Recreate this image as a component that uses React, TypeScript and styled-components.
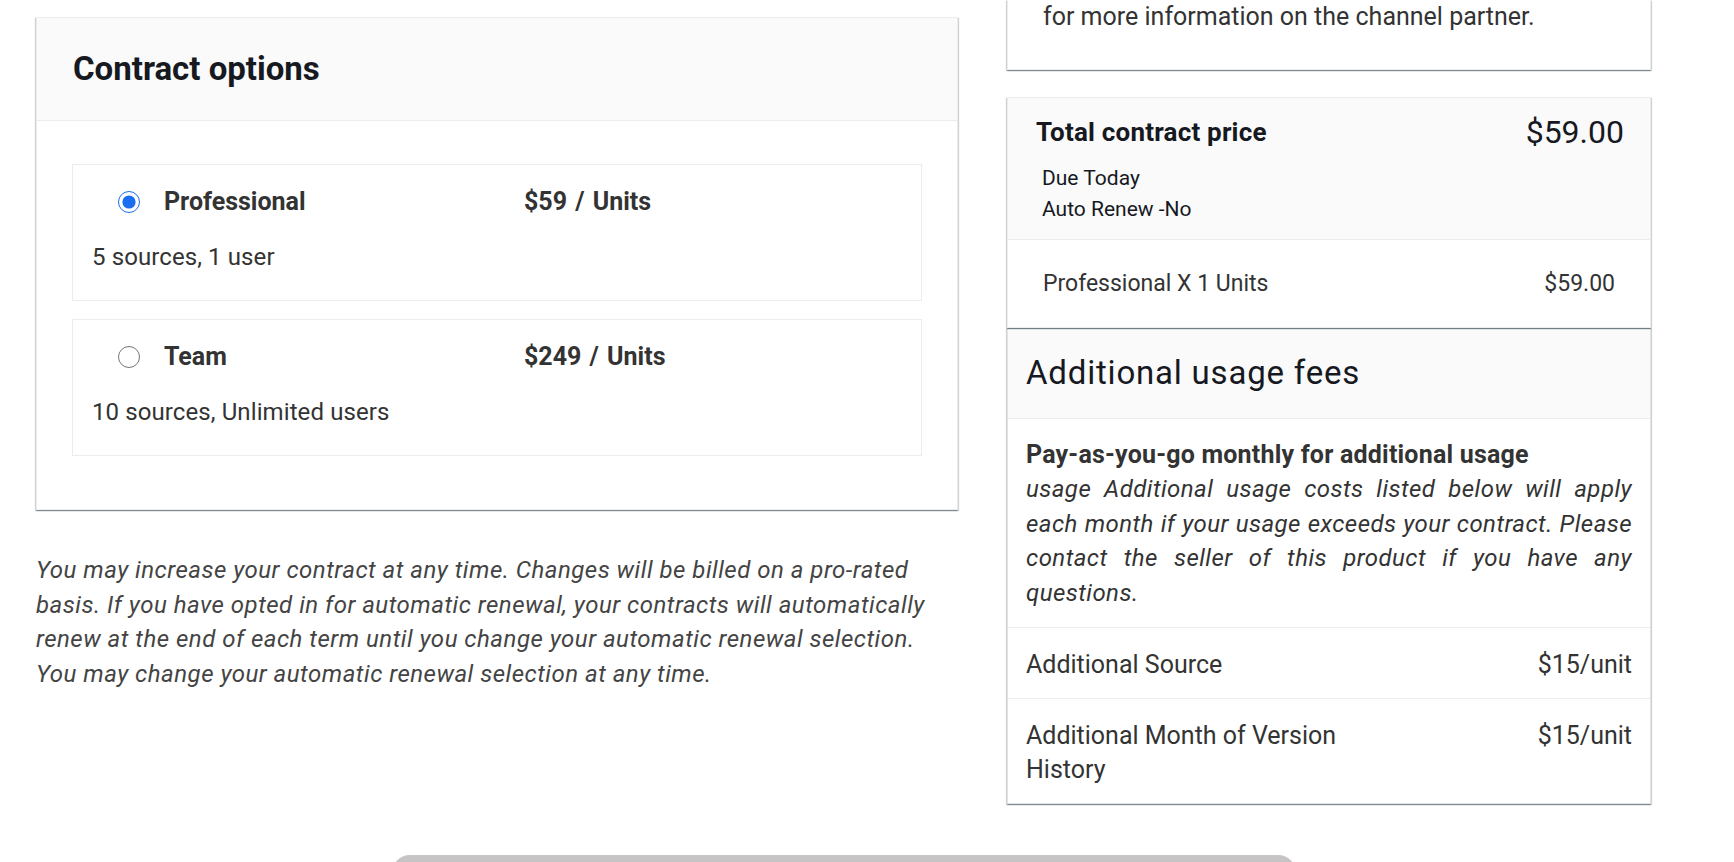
import React, { useState } from 'react';
import styled, { createGlobalStyle } from 'styled-components';

const GlobalStyle = createGlobalStyle`
  html, body {
    margin: 0;
    padding: 0;
    background: #ffffff;
  }
  body {
    font-family: Roboto, "Liberation Sans", Arial, sans-serif;
    color: #333333;
  }
  * {
    box-sizing: border-box;
  }
`;

const cardShadow = `
  0 1px 1px 0 rgba(0, 28, 36, 0.3),
  1px 1px 1px 0 rgba(0, 28, 36, 0.15),
  -1px 1px 1px 0 rgba(0, 28, 36, 0.15)
`;

const Page = styled.div`
  height: 100vh;
  overflow: hidden;
  padding: 0 83px 0 36px;
`;

const Columns = styled.div`
  display: grid;
  grid-template-columns: 922px 644px;
  column-gap: 49px;
  align-items: start;
`;

const LeftColumn = styled.div`
  display: flex;
  flex-direction: column;
  padding-top: 17px;
`;

const Card = styled.section`
  background: #ffffff;
  border: 1px solid #eaeded;
  box-shadow: ${cardShadow};
`;

const CardHeader = styled.div`
  background: #fafafa;
  border-bottom: 1px solid #eaeded;
  padding: 32px 36px;
`;

const CardTitle = styled.h2`
  margin: 0;
  font-size: 33px;
  line-height: 38px;
  font-weight: 700;
  color: #16191f;
`;

const CardBody = styled.div`
  display: flex;
  flex-direction: column;
  gap: 18px;
  padding: 43px 35px 53px;
`;

const OptionBox = styled.label`
  display: flex;
  flex-direction: column;
  border: 1px solid #eaeded;
  padding: 19px 19px 25px;
  cursor: pointer;
`;

const OptionRow = styled.div`
  display: grid;
  grid-template-columns: 22px 336px 1fr;
  column-gap: 24px;
  align-items: center;
  padding-left: 26px;
  height: 35px;
`;

const Radio = styled.input`
  width: 22px;
  height: 22px;
  margin: 0;
  accent-color: #1a6ef0;
  cursor: pointer;
`;

const OptionName = styled.span`
  font-size: 25px;
  font-weight: 700;
  color: #333333;
`;

const OptionPrice = styled.span`
  font-size: 25px;
  font-weight: 700;
  word-spacing: 2px;
  color: #333333;
`;

const OptionDesc = styled.div`
  margin-top: 21px;
  font-size: 24px;
  line-height: 35px;
  letter-spacing: 0.1px;
  color: #333333;
`;

const Disclaimer = styled.p`
  max-width: 905px;
  margin: 43px 0 0;
  font-size: 24px;
  line-height: 34.5px;
  font-style: italic;
  letter-spacing: 0.5px;
  color: #444444;
`;

const RightColumn = styled.div`
  display: flex;
  flex-direction: column;
`;

const InfoPanel = styled.div`
  background: #ffffff;
  border: 1px solid #eaeded;
  border-top: none;
  box-shadow: ${cardShadow};
  padding: 0 35px 34px;
  font-size: 25px;
  line-height: 34.5px;
  color: #333333;
`;

const SummaryPanel = styled.section`
  margin-top: 27px;
  background: #ffffff;
  border: 1px solid #eaeded;
  box-shadow: ${cardShadow};
  position: relative;
  z-index: 1;
`;

const SummaryHeader = styled.div`
  background: #fafafa;
  border-bottom: 1px solid #eaeded;
  padding: 17px 26px 14px 28px;
`;

const SummaryTitleRow = styled.div`
  display: flex;
  justify-content: space-between;
  align-items: center;
  height: 35px;
`;

const SummaryTitle = styled.span`
  font-size: 26px;
  font-weight: 700;
  letter-spacing: 0.2px;
  color: #16191f;
`;

const SummaryTotal = styled.span`
  font-size: 32px;
  font-weight: 400;
  color: #16191f;
`;

const SummaryNotes = styled.div`
  margin-top: 13px;
  padding-left: 6px;
  font-size: 21px;
  line-height: 31px;
  color: #16191f;
`;

const LineItem = styled.div`
  display: flex;
  justify-content: space-between;
  align-items: center;
  padding: 26px 35px;
  font-size: 23px;
  line-height: 35px;
  color: #333333;
`;

const FeesPanel = styled.section`
  background: #ffffff;
  border: 1px solid #e1e4e4;
  box-shadow: ${cardShadow};
`;

const FeesHeader = styled.div`
  background: #fafafa;
  border-bottom: 1px solid #eaeded;
  padding: 24px 18px 25px;
`;

const FeesTitle = styled.h3`
  margin: 0;
  font-size: 33px;
  line-height: 40px;
  font-weight: 400;
  letter-spacing: 0.8px;
  color: #16191f;
`;

const FeesIntro = styled.div`
  padding: 19px 18px 17px;
  line-height: 34.5px;
  color: #333333;
`;

const FeesLead = styled.div`
  font-size: 25px;
  font-weight: 700;
  letter-spacing: 0.2px;
`;

const FeesNote = styled.div`
  font-size: 24px;
  font-style: italic;
  letter-spacing: 0.45px;
  text-align: justify;
`;

const FeeRow = styled.div`
  display: flex;
  justify-content: space-between;
  align-items: flex-start;
  border-top: 1px solid #eaeded;
  padding: 20px 18px 15px;
  font-size: 25px;
  line-height: 34.5px;
  color: #333333;
`;

const FeeName = styled.span`
  max-width: 370px;
`;

const FeePrice = styled.span`
  white-space: nowrap;
`;

const Footer = styled.div`
  display: flex;
  justify-content: center;
  margin-top: 51px;
`;

const SubmitButton = styled.button`
  width: 904px;
  height: 64px;
  border: none;
  border-radius: 18px;
  background: #c6c4c4;
  cursor: not-allowed;
`;

interface Plan {
  id: string;
  name: string;
  price: number;
  description: string;
}

const plans: Plan[] = [
  { id: 'professional', name: 'Professional', price: 59, description: '5 sources, 1 user' },
  { id: 'team', name: 'Team', price: 249, description: '10 sources, Unlimited users' },
];

const fees = [
  { name: 'Additional Source', price: '$15/unit' },
  { name: 'Additional Month of Version History', price: '$15/unit' },
];

const App: React.FC = () => {
  const [selected, setSelected] = useState('professional');
  const plan = plans.find((p) => p.id === selected) ?? plans[0];
  const total = `$${plan.price.toFixed(2)}`;

  return (
    <>
      <GlobalStyle />
      <Page>
        <Columns>
          <LeftColumn>
            <Card>
              <CardHeader>
                <CardTitle>Contract options</CardTitle>
              </CardHeader>
              <CardBody>
                {plans.map((p) => (
                  <OptionBox key={p.id}>
                    <OptionRow>
                      <Radio
                        type="radio"
                        name="plan"
                        checked={selected === p.id}
                        onChange={() => setSelected(p.id)}
                      />
                      <OptionName>{p.name}</OptionName>
                      <OptionPrice>${p.price} / Units</OptionPrice>
                    </OptionRow>
                    <OptionDesc>{p.description}</OptionDesc>
                  </OptionBox>
                ))}
              </CardBody>
            </Card>
            <Disclaimer>
              You may increase your contract at any time. Changes will be billed on a pro-rated
              basis. If you have opted in for automatic renewal, your contracts will automatically
              renew at the end of each term until you change your automatic renewal selection.
              You may change your automatic renewal selection at any time.
            </Disclaimer>
          </LeftColumn>

          <RightColumn>
            <InfoPanel>for more information on the channel partner.</InfoPanel>

            <SummaryPanel>
              <SummaryHeader>
                <SummaryTitleRow>
                  <SummaryTitle>Total contract price</SummaryTitle>
                  <SummaryTotal>{total}</SummaryTotal>
                </SummaryTitleRow>
                <SummaryNotes>
                  <div>Due Today</div>
                  <div>Auto Renew -No</div>
                </SummaryNotes>
              </SummaryHeader>
              <LineItem>
                <span>{plan.name} X 1 Units</span>
                <span>{total}</span>
              </LineItem>
            </SummaryPanel>

            <FeesPanel>
              <FeesHeader>
                <FeesTitle>Additional usage fees</FeesTitle>
              </FeesHeader>
              <FeesIntro>
                <FeesLead>Pay-as-you-go monthly for additional usage</FeesLead>
                <FeesNote>
                  usage Additional usage costs listed below will apply each month if your usage
                  exceeds your contract. Please contact the seller of this product if you have any
                  questions.
                </FeesNote>
              </FeesIntro>
              {fees.map((f) => (
                <FeeRow key={f.name}>
                  <FeeName>{f.name}</FeeName>
                  <FeePrice>{f.price}</FeePrice>
                </FeeRow>
              ))}
            </FeesPanel>
          </RightColumn>
        </Columns>

        <Footer>
          <SubmitButton type="button" disabled aria-label="Create contract" />
        </Footer>
      </Page>
    </>
  );
};

export default App;
